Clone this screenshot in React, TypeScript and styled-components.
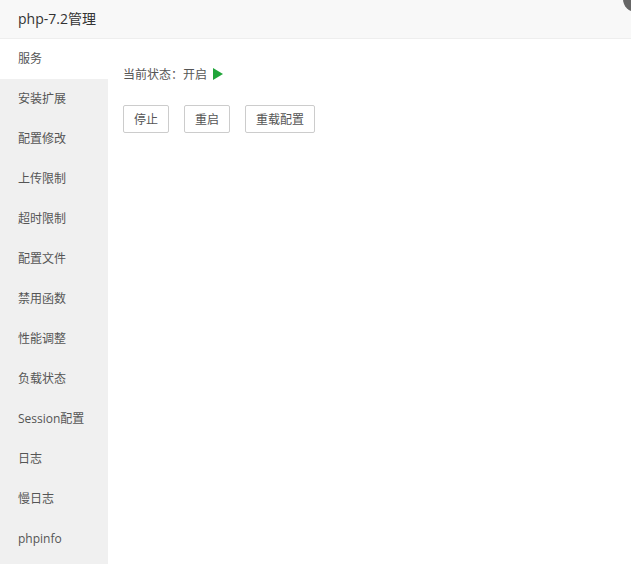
import React from 'react';
import styled, { createGlobalStyle } from 'styled-components';

const Global = createGlobalStyle`
  body { margin: 0; font-family: "Open Sans", "Noto Sans CJK SC", sans-serif; background: #fff; color: #333; }
`;

const Layer = styled.div`
  position: relative;
  width: 631px;
  height: 564px;
  overflow: hidden;
  background: #fff;
`;

const Header = styled.div`
  height: 38px;
  line-height: 38px;
  padding-left: 18px;
  font-size: 14px;
  color: #333;
  background: #f8f8f8;
  border-bottom: 1px solid #eee;
`;

const CloseDot = styled.div`
  position: absolute;
  right: -18px;
  top: -14px;
  width: 26px;
  height: 26px;
  border-radius: 50%;
  background: #666;
`;

const Body = styled.div`
  display: flex;
  height: 525px;
`;

const Side = styled.div`
  width: 108px;
  background: #f0f0f0;
  display: flex;
  flex-direction: column;
`;

const Item = styled.div<{ active?: boolean }>`
  height: 40px;
  line-height: 40px;
  padding-left: 18px;
  font-size: 12px;
  color: #555;
  background: ${({ active }) => (active ? '#fff' : 'transparent')};
`;

const Main = styled.div`
  flex: 1;
  padding: 26px 15px;
`;

const Status = styled.div`
  font-size: 12px;
  color: #555;
  display: flex;
  align-items: center;
  height: 18px;
`;

const Play = styled.span`
  display: inline-block;
  margin-left: 6px;
  width: 0;
  height: 0;
  border-top: 6px solid transparent;
  border-bottom: 6px solid transparent;
  border-left: 10px solid #20a53a;
`;

const Buttons = styled.div`
  display: flex;
  gap: 15px;
  margin-top: 22px;
`;

const Btn = styled.button`
  height: 28px;
  padding: 0 10px;
  border: 1px solid #ccc;
  border-radius: 2px;
  background: #fff;
  font-family: inherit;
  font-size: 12px;
  color: #555;
`;

const items = ['服务', '安装扩展', '配置修改', '上传限制', '超时限制', '配置文件', '禁用函数', '性能调整', '负载状态', 'Session配置', '日志', '慢日志', 'phpinfo'];

export default function App() {
  return (
    <Layer>
      <Global />
      <Header>php-7.2管理</Header>
      <CloseDot />
      <Body>
        <Side>
          {items.map((t, i) => (
            <Item key={t} active={i === 0}>{t}</Item>
          ))}
        </Side>
        <Main>
          <Status>当前状态：开启<Play /></Status>
          <Buttons>
            <Btn>停止</Btn>
            <Btn>重启</Btn>
            <Btn>重载配置</Btn>
          </Buttons>
        </Main>
      </Body>
    </Layer>
  );
}
